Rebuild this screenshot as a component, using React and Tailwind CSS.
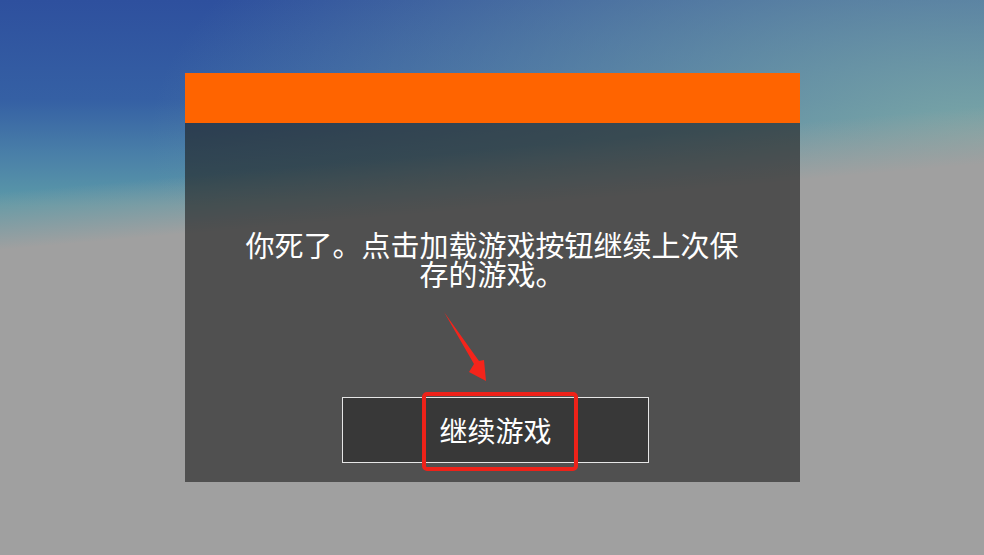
export default function App() {
  return (
    <div className="relative h-screen w-full overflow-hidden pt-[73px] font-['Noto_Sans_CJK_SC','Noto_Sans',sans-serif] bg-[linear-gradient(175deg,rgba(160,160,160,0)_30%,#a0a0a0_39%),radial-gradient(ellipse_at_100%_25%,#7aa6a6_0%,rgba(122,166,166,0)_60%),linear-gradient(180deg,#2e509e_0%,#3560a4_18%,#4a80a8_28%,#5c9aa8_37%)]">
      {/* dialog */}
      <div className="relative mx-auto flex h-[409px] w-[615px] flex-col">
        <div className="h-[50px] bg-[#ff6400]" />
        <div className="flex flex-1 flex-col items-center bg-[rgba(31,31,31,0.62)]">
          <p className="mt-[107px] w-[500px] text-center text-[29px] leading-[29px] text-white">
            你死了。点击加载游戏按钮继续上次保存的游戏。
          </p>
          <button className="relative ml-[7px] mt-[109px] flex h-[66px] w-[307px] items-center justify-center border border-[#e6e6e6] bg-[#383838] text-[28px] text-white">
            继续游戏
            {/* annotation box */}
            <span className="pointer-events-none absolute left-[79px] top-[-6px] h-[79px] w-[156px] rounded-[5px] border-4 border-[#ee2219]" />
          </button>
        </div>

        {/* annotation arrow */}
        <svg
          className="pointer-events-none absolute left-[255px] top-[235px]"
          width="50"
          height="80"
          viewBox="0 0 50 80"
        >
          <polygon
            points="4,4 39,53 44,52 46,73 29,64 34,56"
            fill="#f5241b"
          />
        </svg>
      </div>
    </div>
  );
}
